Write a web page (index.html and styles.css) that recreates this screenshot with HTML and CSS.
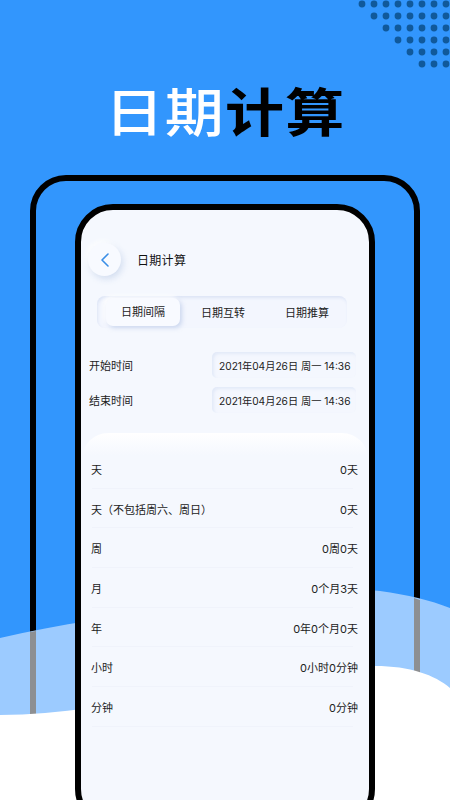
FILE: index.html
```html
<!DOCTYPE html>
<html lang="zh">
<head>
<meta charset="utf-8">
<title>日期计算</title>
<link rel="stylesheet" href="styles.css">
</head>
<body>
<div class="screen">
  <svg class="dots" width="92" height="70" viewBox="0 0 92 70" fill="#10599b">
    <g>
      <circle cx="4" cy="4" r="3.4"/><circle cx="16" cy="4" r="3.4"/><circle cx="28" cy="4" r="3.4"/><circle cx="40" cy="4" r="3.4"/><circle cx="52" cy="4" r="3.4"/><circle cx="64" cy="4" r="3.4"/><circle cx="76" cy="4" r="3.4"/><circle cx="88" cy="4" r="3.4"/>
      <circle cx="16" cy="16" r="3.4"/><circle cx="28" cy="16" r="3.4"/><circle cx="40" cy="16" r="3.4"/><circle cx="52" cy="16" r="3.4"/><circle cx="64" cy="16" r="3.4"/><circle cx="76" cy="16" r="3.4"/><circle cx="88" cy="16" r="3.4"/>
      <circle cx="28" cy="28" r="3.4"/><circle cx="40" cy="28" r="3.4"/><circle cx="52" cy="28" r="3.4"/><circle cx="64" cy="28" r="3.4"/><circle cx="76" cy="28" r="3.4"/><circle cx="88" cy="28" r="3.4"/>
      <circle cx="40" cy="40" r="3.4"/><circle cx="52" cy="40" r="3.4"/><circle cx="64" cy="40" r="3.4"/><circle cx="76" cy="40" r="3.4"/><circle cx="88" cy="40" r="3.4"/>
      <circle cx="52" cy="52" r="3.4"/><circle cx="64" cy="52" r="3.4"/><circle cx="76" cy="52" r="3.4"/><circle cx="88" cy="52" r="3.4"/>
      <circle cx="64" cy="64" r="3.4"/><circle cx="76" cy="64" r="3.4"/><circle cx="88" cy="64" r="3.4"/>
    </g>
  </svg>

  <h1 class="headline"><span class="headline-text"><span class="headline-light">日期</span><span class="headline-dark">计算</span></span></h1>

  <div class="outer-frame">
    <div class="phone">
      <header class="app-bar">
        <div class="back-btn">
          <svg width="10" height="16" viewBox="0 0 10 16" fill="none" stroke="#3a8ee6" stroke-width="1.6" stroke-linecap="round" stroke-linejoin="round"><path d="M8 2 L2 8 L8 14"/></svg>
        </div>
        <div class="app-title">日期计算</div>
      </header>

      <div class="tabs">
        <div class="tab tab-active">日期间隔</div>
        <div class="tab">日期互转</div>
        <div class="tab">日期推算</div>
      </div>

      <div class="field">
        <span class="field-label">开始时间</span>
        <div class="field-box"><span class="field-value">2021年04月26日 周一 14:36</span></div>
      </div>
      <div class="field">
        <span class="field-label">结束时间</span>
        <div class="field-box"><span class="field-value">2021年04月26日 周一 14:36</span></div>
      </div>

      <section class="results">
        <div class="row"><span>天</span><span>0天</span></div>
        <div class="row"><span>天（不包括周六、周日）</span><span>0天</span></div>
        <div class="row"><span>周</span><span>0周0天</span></div>
        <div class="row"><span>月</span><span>0个月3天</span></div>
        <div class="row"><span>年</span><span>0年0个月0天</span></div>
        <div class="row"><span>小时</span><span>0小时0分钟</span></div>
        <div class="row"><span>分钟</span><span>0分钟</span></div>
      </section>
    </div>
  </div>

  <svg class="waves" width="450" height="220" viewBox="0 0 450 220">
    <path fill="#9ccbff" d="M0 58 C60 44 120 36 190 26 C260 16 330 4 380 11 C408 15 430 20 450 28 V220 H0 Z"/>
    <path fill="#8d8f92" d="M30 52 L36 51 V135 H30 Z"/>
    <path fill="#8d8f92" d="M414 18 L420 20 V105 L414 102 Z"/>
    <path fill="#ffffff" d="M0 135 C30 135 60 132 90 128 C180 116 270 92 375 86 C410 86 435 95 450 108 V220 H0 Z"/>
  </svg>
</div>
</body>
</html>
```
FILE: styles.css
```css
html, body {
  margin: 0;
  padding: 0;
}

.screen {
  position: relative;
  width: 450px;
  height: 800px;
  overflow: hidden;
  background: #3296fd;
  font-family: Inter, "Noto Sans CJK SC", sans-serif;
}

.dots {
  position: absolute;
  top: 0;
  right: 0;
}

.headline {
  margin: 0;
  height: 175px;
  padding-top: 74px;
  box-sizing: border-box;
  font-family: "Noto Sans CJK SC", sans-serif;
  font-size: 52px;
  line-height: 72px;
  font-weight: 500;
  text-align: center;
  white-space: nowrap;
}

.headline-text {
  display: inline-block;
  letter-spacing: 1px;
  transform: scaleX(1.135);
}

.headline-light { color: #ffffff; }
.headline-dark { color: #000000; font-weight: 700; }

.outer-frame {
  margin: 0 30px;
  padding: 23px 39px 0;
  height: 700px;
  border: 6px solid #000;
  border-radius: 36px;
  box-sizing: border-box;
}

.phone {
  position: relative;
  z-index: 2;
  box-sizing: border-box;
  width: 300px;
  height: 623px;
  border: 6px solid #000;
  border-radius: 38px;
  background: #f5f8fe;
  padding: 0 6px;
  color: #111;
}

.waves {
  position: absolute;
  left: 0;
  bottom: 0;
  z-index: 1;
}

.app-bar {
  display: flex;
  align-items: center;
  padding: 33px 0 0 1px;
  gap: 16px;
}

.back-btn {
  width: 33px;
  height: 33px;
  border-radius: 50%;
  background: #f8faff;
  display: flex;
  align-items: center;
  justify-content: center;
  box-shadow: 2px 3px 6px rgba(170, 190, 225, .45), -2px -2px 5px #fff;
}

.app-title {
  font-size: 12px;
  letter-spacing: .3px;
}

.tabs {
  display: flex;
  align-items: center;
  margin: 20px 16px 0 10px;
  height: 32px;
  padding-left: 9px;
  border-radius: 8px;
  background: #f3f6fe;
  box-shadow: inset 1px 2px 3px rgba(190, 205, 235, .4);
}

.tab {
  width: 84px;
  font-size: 11px;
  text-align: center;
  color: #222;
  flex: none;
}

.tab-active {
  width: 74px;
  height: 28px;
  line-height: 28px;
  border-radius: 7px;
  background: #f8faff;
  box-shadow: 2px 2px 4px rgba(165, 185, 225, .5), -2px -2px 4px #fff;
  margin-right: 1px;
}

.field {
  display: flex;
  align-items: center;
  justify-content: space-between;
  height: 26px;
  margin-top: 9px;
  padding-left: 2px;
  font-size: 11px;
}

.tabs + .field {
  margin-top: 24px;
}

.field-label {
  color: #222;
}

.field-box {
  box-sizing: border-box;
  width: 144px;
  height: 26px;
  margin-right: 7px;
  padding: 0 0 0 7px;
  border-radius: 5px;
  background: #f4f7fe;
  box-shadow: inset 2px 2px 3px rgba(195, 208, 238, .35);
  display: flex;
  align-items: center;
  white-space: nowrap;
}

.field-value {
  font-size: 10.2px;
  color: #222;
}

.results {
  margin: 20px -5px 0;
  padding-top: 16px;
  border-radius: 26px 26px 0 0;
  background: linear-gradient(#ffffff 0, #f5f8fe 22px);
}

.row {
  display: flex;
  align-items: center;
  justify-content: space-between;
  height: 39.7px;
  padding: 0 10px 0 9px;
  font-size: 11px;
  color: #222;
  position: relative;
  box-sizing: border-box;
}

.row::after {
  content: "";
  position: absolute;
  left: 10px;
  right: 15px;
  bottom: 0;
  height: 1px;
  background: #f0f3fb;
}
```
